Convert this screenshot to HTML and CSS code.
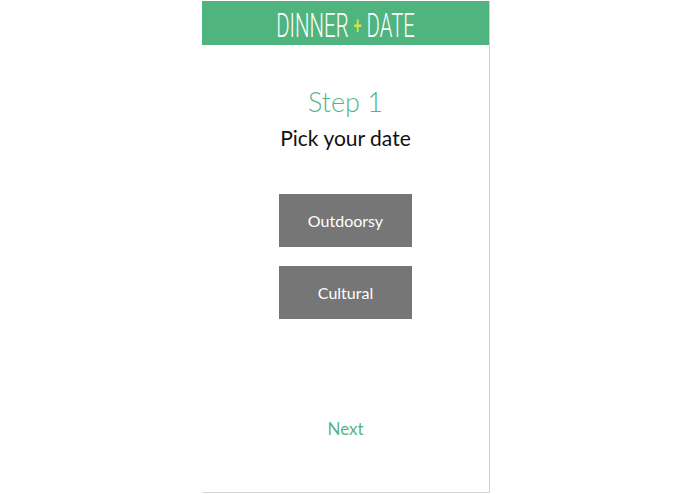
FILE: index.html
```html
<!DOCTYPE html>
<html lang="en">
<head>
  <meta charset="UTF-8" />
  <meta name="viewport" content="width=device-width, initial-scale=1.0" />
  <title>Dinner + Date</title>
  <link rel="stylesheet" href="styles.css">
</head>
<body>
  <div class="phone">
    <div class="header">
      <h1 class="logo">DINNER <span class="plus">+</span> DATE</h1>
    </div>
    <div class="content">
      <h2 class="step">Step 1</h2>
      <p class="prompt">Pick your date</p>
      <div class="choices">
        <button class="choice">Outdoorsy</button>
        <button class="choice">Cultural</button>
      </div>
      <a class="next" href="#">Next</a>
    </div>
  </div>
</body>
</html>
```

FILE: styles.css
```css
body {
  margin: 0;
  background: #fff;
  font-family: "Lato", "Noto Sans", sans-serif;
}
.phone {
  width: 287px;
  height: 491px;
  margin: 1px 0 0 202px;
  border-right: 1px solid #cfcfcf;
  border-bottom: 1px solid #d8d8d8;
  display: flex;
  flex-direction: column;
}
.header {
  height: 44px;
  background: #4fb47e;
  display: flex;
  align-items: center;
  justify-content: center;
}
.logo {
  margin: 0;
  padding-top: 5px;
  font-family: "Roboto", sans-serif;
  font-weight: 300;
  font-size: 34px;
  line-height: 39px;
  color: #fff;
  transform: scaleX(0.6);
  white-space: nowrap;
}
.plus {
  color: #c9e64a;
  font-size: 24px;
  font-weight: 500;
  vertical-align: 3px;
}
.content {
  flex: 1;
  display: flex;
  flex-direction: column;
  align-items: center;
}
.step {
  margin: 42px 0 0;
  font-weight: 300;
  font-size: 27px;
  line-height: 30px;
  color: #56b585;
}
.prompt {
  margin: 9px 0 0;
  font-size: 21px;
  line-height: 24px;
  color: #111;
}
.choices {
  margin-top: 44px;
  display: flex;
  flex-direction: column;
  gap: 19px;
}
.choice {
  width: 133px;
  height: 53px;
  border: none;
  background: #767676;
  color: #fff;
  font-family: "Lato", "Noto Sans", sans-serif;
  font-size: 16px;
  cursor: pointer;
}
.next {
  margin-top: auto;
  margin-bottom: 53px;
  font-size: 17px;
  color: #56b585;
  text-decoration: none;
}
```
